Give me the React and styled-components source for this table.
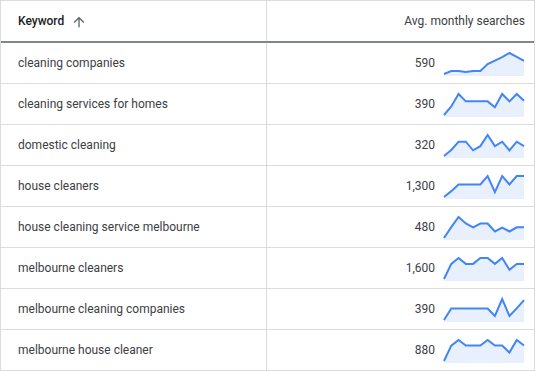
import React from 'react'
import styled, { createGlobalStyle } from 'styled-components'

const GlobalStyle = createGlobalStyle`
  html, body {
    margin: 0;
    padding: 0;
    background: #fff;
  }
  body {
    font-family: Roboto, "Liberation Sans", Arial, sans-serif;
  }
`

const rows = [
  { keyword: 'cleaning companies', searches: '590', trend: [0, 0.14, 0.14, 0.09, 0.14, 0.14, 0.47, 0.64, 0.8, 1, 0.81, 0.63] },
  { keyword: 'cleaning services for homes', searches: '390', trend: [0, 0.41, 1, 0.65, 0.65, 0.65, 0.65, 0.37, 1, 0.65, 1, 0.68] },
  { keyword: 'domestic cleaning', searches: '320', trend: [0, 0.29, 0.68, 0.68, 0.27, 0.47, 1, 0.47, 0.68, 0.27, 0.68, 0.47] },
  { keyword: 'house cleaners', searches: '1,300', trend: [0, 0.28, 0.6, 0.6, 0.6, 0.6, 1, 0.23, 1, 0.6, 1, 1] },
  { keyword: 'house cleaning service melbourne', searches: '480', trend: [0, 0.52, 1, 0.69, 0.51, 0.69, 0.69, 0.31, 0.49, 0.31, 0.51, 0.51] },
  { keyword: 'melbourne cleaners', searches: '1,600', trend: [0, 0.72, 1, 0.72, 0.72, 1, 1, 0.72, 1, 0.44, 0.72, 0.72] },
  { keyword: 'melbourne cleaning companies', searches: '390', trend: [0, 0.55, 0.55, 0.55, 0.55, 0.55, 0.55, 0.19, 1, 0.19, 0.55, 0.95] },
  { keyword: 'melbourne house cleaner', searches: '880', trend: [0, 0.73, 1, 0.74, 0.74, 0.74, 1, 0.74, 0.74, 0.4, 1, 0.74] },
]

const Table = styled.div`
  width: 535px;
  border: 1px solid #dadce0;
  border-bottom: none;
  box-sizing: border-box;
  color: #3c4043;
  font-size: 12px;
`

const Row = styled.div`
  display: grid;
  grid-template-columns: 266px 1fr;
  box-sizing: border-box;
  border-bottom: ${p => (p.$head ? '2px solid #80868b' : '1px solid #dadce0')};
  height: ${p => (p.$head ? '42px' : '41px')};
`

const KeywordCell = styled.div`
  display: flex;
  align-items: center;
  gap: 7px;
  padding-left: 17px;
  border-right: 1px solid #dadce0;
  font-weight: ${p => (p.$head ? 500 : 400)};
  color: ${p => (p.$head ? '#202124' : '#3c4043')};
  white-space: nowrap;
`

const ValueCell = styled.div`
  display: flex;
  align-items: center;
  justify-content: flex-end;
  gap: 8px;
  padding-right: 9px;
  white-space: nowrap;
`

const SortIcon = styled.svg`
  width: 16px;
  height: 16px;
  fill: #5f6368;
  margin-top: 1px;
`

function Sparkline({ values }) {
  const w = 82
  const pts = values.map((v, i) => [1 + (i * 80) / 11, 24 - v * 21])
  const line = pts.map(([x, y], i) => `${i ? 'L' : 'M'}${x.toFixed(2)} ${y.toFixed(2)}`).join(' ')
  const area = `${line} L${pts[pts.length - 1][0].toFixed(2)} 26 L${pts[0][0].toFixed(2)} 26 Z`
  return (
    <svg width={w} height="26" viewBox={`0 0 ${w} 26`}>
      <path d={area} fill="#e8f0fe" />
      <path d={line} fill="none" stroke="#4285f4" strokeWidth="2" strokeLinejoin="miter" />
    </svg>
  )
}

export default function App() {
  return (
    <>
      <GlobalStyle />
      <Table>
        <Row $head>
          <KeywordCell $head>
            Keyword
            <SortIcon viewBox="0 0 24 24">
              <path d="M4 12l1.41 1.41L11 7.83V20h2V7.83l5.58 5.59L20 12l-8-8-8 8z" />
            </SortIcon>
          </KeywordCell>
          <ValueCell>Avg. monthly searches</ValueCell>
        </Row>
        {rows.map(r => (
          <Row key={r.keyword}>
            <KeywordCell>{r.keyword}</KeywordCell>
            <ValueCell>
              {r.searches}
              <Sparkline values={r.trend} />
            </ValueCell>
          </Row>
        ))}
      </Table>
    </>
  )
}
